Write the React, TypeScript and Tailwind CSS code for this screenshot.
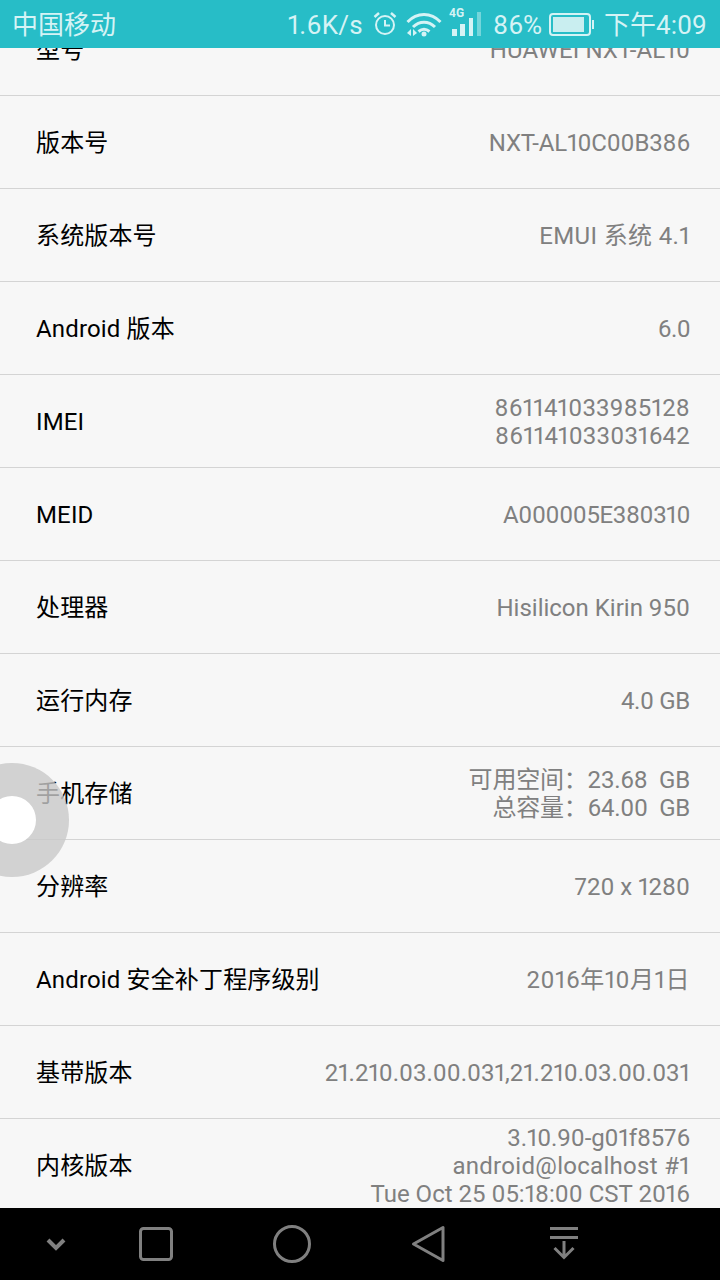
const rows: { label: string; value: string[] }[] = [
  { label: "型号", value: ["HUAWEI NXT-AL10"] },
  { label: "版本号", value: ["NXT-AL10C00B386"] },
  { label: "系统版本号", value: ["EMUI 系统 4.1"] },
  { label: "Android 版本", value: ["6.0"] },
  { label: "IMEI", value: ["861141033985128", "861141033031642"] },
  { label: "MEID", value: ["A000005E380310"] },
  { label: "处理器", value: ["Hisilicon Kirin 950"] },
  { label: "运行内存", value: ["4.0 GB"] },
  { label: "手机存储", value: ["可用空间：23.68  GB", "总容量：64.00  GB"] },
  { label: "分辨率", value: ["720 x 1280"] },
  { label: "Android 安全补丁程序级别", value: ["2016年10月1日"] },
  { label: "基带版本", value: ["21.210.03.00.031,21.210.03.00.031"] },
  { label: "内核版本", value: ["3.10.90-g01f8576", "android@localhost #1", "Tue Oct 25 05:18:00 CST 2016"] },
];

const lineTracking: Record<string, string> = {
  "HUAWEI NXT-AL10": "tracking-[0.13px]",
  "NXT-AL10C00B386": "tracking-[-0.13px]",
  "EMUI 系统 4.1": "tracking-[0.35px]",
  "6.0": "tracking-[-0.6px]",
  "861141033985128": "tracking-[0.2px]",
  "861141033031642": "tracking-[0.2px]",
  "A000005E380310": "tracking-[-0.35px]",
  "4.0 GB": "tracking-[-0.33px]",
  "可用空间：23.68  GB": "tracking-[-0.2px]",
  "总容量：64.00  GB": "tracking-[-0.25px]",
  "2016年10月1日": "tracking-[0.5px]",
  "3.10.90-g01f8576": "tracking-[-0.12px]",
  "android@localhost #1": "tracking-[0.3px]",
};

const StatusIcons = () => (
  <>
    <svg width="24" height="48" viewBox="0 0 24 48" fill="none" stroke="#d5f3f5" strokeWidth="2">
      <circle cx="12" cy="25" r="9" />
      <path d="M12 20V25.5H17" />
      <path d="M1.5 17L6 13M22.5 17L18 13" strokeWidth="2.5" />
    </svg>
    <svg width="36" height="48" viewBox="0 0 36 48" fill="none" stroke="#d5f3f5" strokeWidth="3" className="ml-[9px]">
      <path d="M1.5 22C11 12 25 12 34.5 22" />
      <path d="M7 27C13.5 20.5 22.5 20.5 29 27" />
      <path d="M12.5 31.5C16 28.7 20 28.7 23.5 31.5" />
      <circle cx="18" cy="34" r="2.5" fill="#d5f3f5" stroke="none" />
      <path d="M5 29L1 33L5 36ZM7 29L11 33L7 36Z" fill="#d5f3f5" stroke="none" />
    </svg>
  </>
);

const SignalIcon = () => (
  <div className="relative ml-[7px] h-[48px] w-[32px]">
    <span className="absolute left-0 top-[6px] font-['Roboto',sans-serif] text-[12px] font-bold leading-[14px] text-[#d5f3f5]">
      4G
    </span>
    <svg width="32" height="48" viewBox="0 0 32 48" fill="#d5f3f5" className="absolute left-0 top-0">
      <rect x="3" y="29" width="5" height="7" />
      <rect x="11" y="24" width="5" height="12" />
      <rect x="20" y="18" width="4" height="18" />
      <rect x="28" y="12" width="4" height="24" opacity="0.45" />
    </svg>
  </div>
);

const BatteryIcon = () => (
  <svg width="46" height="24" viewBox="0 0 46 24" fill="none">
    <rect x="1" y="2" width="40" height="21" rx="3" stroke="#d5f3f5" strokeWidth="2" />
    <rect x="4" y="5" width="31" height="15" fill="#c9eef0" />
    <path d="M43 8H45V17H43Z" fill="#d5f3f5" />
  </svg>
);

const NavBar = () => (
  <div className="relative flex h-[72px] shrink-0 bg-black">
    <svg width="720" height="72" viewBox="0 0 720 72" fill="none" stroke="#808080" strokeWidth="3">
      <path d="M48 32L56 40L64 32" strokeWidth="4" />
      <rect x="140.5" y="20.5" width="31" height="31" rx="3" />
      <circle cx="292" cy="36" r="17.5" />
      <path d="M443 19.5V52.5L413.5 36Z" strokeLinejoin="round" />
      <path d="M550 20.5H578M550 29.5H578" />
      <path d="M564 33V49M554.5 40L564 49.5L573.5 40" />
    </svg>
  </div>
);

export default function App() {
  return (
    <div className="relative flex h-[1280px] w-[720px] flex-col overflow-hidden bg-[#f7f7f7] font-['Roboto','Noto_Sans_CJK_SC',sans-serif] proportional-nums">
      <div className="z-10 flex h-[48px] shrink-0 items-center justify-between bg-[#27bdc7] pl-[12px] pr-[13px] text-[26px] text-[#d5f3f5]">
        <span className="pt-[2px]">中国移动</span>
        <div className="flex items-center">
          <span className="mr-[10px] pt-[2px] tracking-[0.3px]">1.6K/s</span>
          <StatusIcons />
          <SignalIcon />
          <span className="ml-[12px] mr-[7px] pt-[2px]">86%</span>
          <BatteryIcon />
          <span className="ml-[9px] pt-[2px]">下午4:09</span>
        </div>
      </div>

      <div className="flex-1 overflow-hidden">
        <div className="-mt-[45px]">
          {rows.map((row) => (
            <div
              key={row.label}
              className="flex h-[93px] items-center justify-between border-b border-[#d4d4d4] pl-[36px] pr-[30px] pt-[2px]"
            >
              <span className="text-[24px] tracking-[0.15px] text-black">{row.label}</span>
              <div className="text-right text-[24px] leading-[28px] text-[#808080]">
                {row.value.map((line) => (
                  <div key={line} className={`whitespace-pre ${lineTracking[line] ?? ""}`}>
                    {line}
                  </div>
                ))}
              </div>
            </div>
          ))}
        </div>
      </div>

      <NavBar />

      {/* floating ball */}
      <div className="absolute left-[-45px] top-[763px] flex h-[114px] w-[114px] items-center justify-center rounded-full bg-[#c8c8c8]/80">
        <div className="h-[48px] w-[48px] rounded-full bg-white" />
      </div>
    </div>
  );
}
